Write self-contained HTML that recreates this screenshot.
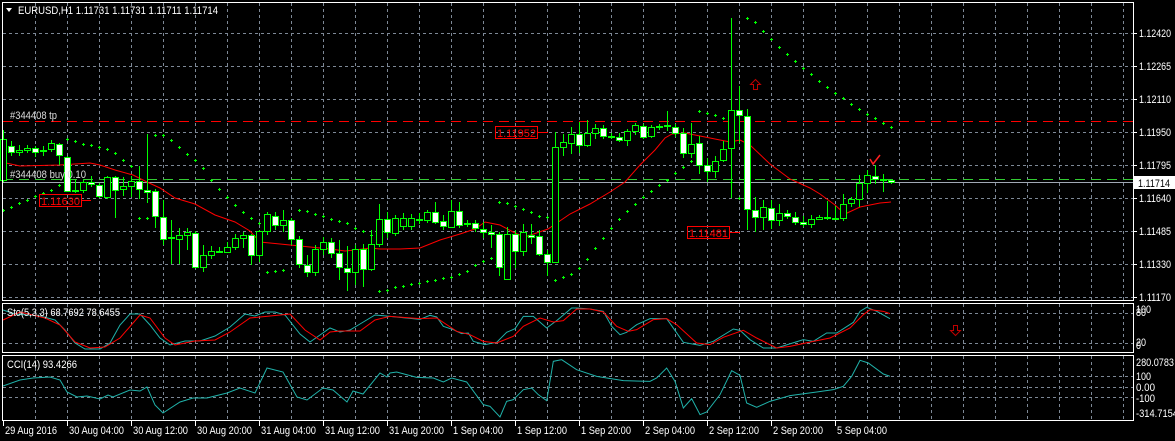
<!DOCTYPE html>
<html><head><meta charset="utf-8"><style>
html,body{margin:0;padding:0;background:#000;width:1175px;height:441px;overflow:hidden}
svg{display:block}
text{font-family:"Liberation Sans",sans-serif;font-size:11px}
</style></head><body>
<svg id="s" width="1175" height="441" xmlns="http://www.w3.org/2000/svg">
<rect width="1175" height="441" fill="#000"/>
<g id="grid" stroke="#7d8896" stroke-width="1" stroke-dasharray="3,3"></g>
<g id="lines"></g>
<g id="cand"></g>
<g id="sar" fill="#00ff00"></g>
<rect x="2.5" y="2.5" width="1131" height="298" fill="none" stroke="#fff"/>
<rect x="2.5" y="303.5" width="1131" height="49" fill="none" stroke="#fff"/>
<rect x="2.5" y="355.5" width="1131" height="65" fill="none" stroke="#fff"/>
<g id="txt" fill="#fff"></g>
</svg>
<script>
var NS="http://www.w3.org/2000/svg";
function el(p,t,a,tx){var e=document.createElementNS(NS,t);for(var k in a)e.setAttribute(k,a[k]);if(tx!=null)e.textContent=tx;document.getElementById(p).appendChild(e);return e;}
function tl(a,s,w){a.textLength=w;a.lengthAdjust='spacingAndGlyphs';return el('txt','text',a,s);}
for(var x=35;x<=1123;x+=32){el('grid','line',{x1:x+.5,y1:3,x2:x+.5,y2:300});el('grid','line',{x1:x+.5,y1:304,x2:x+.5,y2:352});el('grid','line',{x1:x+.5,y1:356,x2:x+.5,y2:420});}
for(var y=33;y<=297;y+=33){el('grid','line',{x1:3,y1:y+.5,x2:1133,y2:y+.5});}
[313,343].forEach(function(y){el('grid','line',{x1:3,y1:y+.5,x2:1133,y2:y+.5});});
[376,387,397].forEach(function(y){el('grid','line',{x1:3,y1:y+.5,x2:1133,y2:y+.5});});
el('lines','line',{x1:3,y1:121.5,x2:1133,y2:121.5,stroke:'#ff0000','stroke-dasharray':'10,6'});
el('lines','line',{x1:3,y1:179.5,x2:1133,y2:179.5,stroke:'#32cd32','stroke-dasharray':'10,6'});
el('lines','line',{x1:3,y1:182.5,x2:1133,y2:182.5,stroke:'#a0a8b4'});
var ma=[[6,163],[20,166],[60,165],[90,163],[100,165],[115,170],[133,175],[147,182],[160,188],[175,198],[195,204],[215,215],[235,222],[250,231],[260,242],[280,244],[300,246],[330,249],[345,251],[355,250],[370,248],[380,249],[400,249],[420,248],[440,240],[460,234],[475,229],[485,222],[500,225],[515,233],[525,237],[548,229],[570,214],[590,204],[610,192],[625,182],[640,165],[655,150],[665,138],[672,134],[685,133],[700,136],[710,138],[730,142],[740,140],[750,145],[770,164],[790,179],[810,188],[820,194],[835,205],[845,214],[860,207],[880,203],[891,202]];
el('lines','polyline',{points:ma.join(' '),fill:'none',stroke:'#ff0000','stroke-width':1});
var C=[[3,139,180,0,130,182],[11,146,152,1,141,156],[19,150,152,0,145,156],[27,148,150,0,145,153],[35,148,152,1,146,157],[43,150,151,1,146,156],[51,143,149,0,140,152],[59,144,155,1,143,165],[67,157,191,1,156,192],[75,190,191,2,180,193],[83,182,190,0,179,193],[91,182,184,1,176,187],[99,185,196,1,183,198],[107,177,197,0,176,199],[115,177,190,1,176,218],[123,186,189,0,177,196],[131,181,186,0,176,197],[139,181,189,1,166,199],[147,190,192,1,134,203],[155,191,216,1,189,228],[163,217,239,1,200,245],[171,237,238,2,220,264],[179,235,239,0,228,264],[187,232,235,0,228,250],[195,233,267,1,231,268],[203,255,267,0,245,272],[211,251,255,0,246,259],[219,251,252,2,247,253],[227,247,252,0,242,253],[235,238,247,0,234,250],[243,235,238,0,232,248],[251,235,255,1,234,265],[259,231,255,0,230,262],[267,214,231,0,212,235],[275,216,225,1,212,230],[283,220,225,0,210,232],[291,220,239,1,218,245],[299,239,264,1,236,268],[307,265,272,1,255,277],[315,249,272,0,245,276],[323,242,249,0,237,255],[331,242,253,1,238,258],[339,253,267,1,240,280],[347,268,272,1,246,291],[355,249,272,0,245,285],[363,249,269,1,244,287],[371,244,269,0,230,271],[379,219,244,0,204,247],[387,219,232,1,212,238],[395,218,233,0,215,236],[403,218,226,0,213,230],[411,218,226,0,214,230],[419,219,220,2,213,224],[427,212,220,0,210,223],[435,212,222,1,202,224],[443,221,226,1,215,230],[451,211,227,0,200,228],[459,211,225,1,202,228],[467,223,224,2,220,227],[475,223,228,1,220,232],[483,229,232,1,222,238],[491,232,234,1,225,248],[499,234,267,1,232,276],[507,234,279,0,227,280],[515,234,251,1,230,268],[523,232,251,0,224,256],[531,235,237,1,224,244],[539,236,254,1,230,256],[547,254,262,1,250,276],[555,147,262,0,132,263],[563,142,147,0,134,156],[571,134,143,0,127,154],[579,134,145,1,122,153],[587,133,145,0,120,147],[595,128,133,0,124,139],[603,128,136,1,125,139],[611,136,137,2,133,139],[619,137,140,1,133,142],[627,131,140,0,129,146],[635,125,131,0,123,135],[643,126,137,1,124,139],[651,127,136,0,125,138],[659,126,127,2,124,130],[667,125,126,2,111,131],[675,127,133,1,124,137],[683,133,153,1,128,158],[691,144,153,0,123,158],[699,143,165,1,136,174],[707,165,171,1,158,182],[715,161,171,0,156,178],[723,149,160,0,141,162],[731,110,148,0,18,198],[739,110,115,1,86,143],[747,116,209,1,109,230],[755,210,217,1,197,232],[763,207,217,0,200,230],[771,208,220,1,200,229],[779,213,220,0,204,226],[787,213,216,1,210,219],[795,217,222,1,212,225],[803,222,224,1,216,227],[811,219,224,0,215,228],[819,217,219,0,215,220],[827,217,218,2,201,220],[835,218,219,2,206,220],[843,204,218,0,194,221],[851,199,203,0,197,207],[859,183,199,0,175,207],[867,175,183,0,170,193],[875,176,179,1,165,184],[883,179,180,2,174,192],[891,180,182,1,179,184]];
C.forEach(function(c){var x=c[0];
 el('cand','line',{x1:x+.5,y1:c[4],x2:x+.5,y2:c[5],stroke:'#00ff00'});
 var h=Math.max(1,c[2]-c[1]);
 if(c[3]==2){el('cand','rect',{x:x-3,y:c[1],width:7,height:h<=1?2:h,fill:'#00ff00'});}
 else el('cand','rect',{x:x-2.5,y:c[1]+.5,width:6,height:h,fill:c[3]?'#fff':'#000',stroke:'#00ff00'});
});
var S=[[3,210],[11,207],[19,203],[27,200],[35,196],[43,193],[51,190],[59,185],[67,139],[75,141],[83,144],[91,145],[99,147],[107,149],[115,153],[123,160],[131,166],[139,218],[147,218],[155,135],[163,135],[171,140],[179,147],[187,154],[195,160],[203,168],[211,180],[219,189],[227,197],[235,205],[243,212],[251,218],[259,223],[267,272],[275,271],[283,270],[299,210],[307,211],[315,214],[323,216],[331,219],[339,221],[347,223],[355,228],[363,231],[371,235],[379,291],[387,290],[395,287],[403,286],[411,284],[419,283],[427,281],[435,280],[443,278],[451,277],[459,274],[467,271],[475,265],[483,261],[491,258],[499,202],[507,203],[515,206],[523,209],[531,212],[539,216],[547,217],[555,280],[563,277],[571,274],[579,268],[587,259],[595,248],[603,238],[611,228],[619,219],[627,211],[635,204],[643,197],[651,191],[659,185],[667,180],[675,173],[683,167],[691,161],[699,111],[707,113],[715,115],[723,118],[731,182],[739,198],[747,18],[755,22],[763,31],[771,39],[779,47],[787,54],[795,61],[803,68],[811,74],[819,81],[827,87],[835,93],[843,98],[851,104],[859,109],[867,114],[875,118],[883,123],[891,127]];
S.forEach(function(p){el('sar','rect',{x:p[0]-1,y:p[1],width:3,height:1});el('sar','rect',{x:p[0],y:p[1]-1,width:1,height:3});});
function Z(a){return a.map(function(p){return [390+p[0]/3,298+p[1]/3];});}
var stoC=[[3,310],[15,314],[40,316],[55,320],[65,330],[75,343],[85,349],[100,349],[110,343],[120,325],[130,314],[140,314],[150,325],[160,338],[170,345],[185,341],[200,341],[215,336],[230,327],[245,314],[255,316],[265,312],[275,312],[285,315],[300,334],[310,342],[320,335],[330,328],[340,332],[350,330],[360,324],[375,315]].concat(Z([[0,55],[90,64],[120,52],[140,57],[160,85],[190,95],[215,107],[235,105],[250,130],[285,140],[320,133],[350,103],[375,92],[400,55],[430,55],[470,90],[500,68],[545,30],[560,30],[600,33],[640,40],[665,85],[690,110],[710,103],[740,80],[780,62],[830,62],[880,133],[930,142],[970,130],[1030,93],[1050,97],[1080,125],[1120,150],[1160,150],[1240,125],[1270,130],[1310,105],[1340,105],[1390,73],[1410,40],[1430,28],[1460,40],[1500,62]]));
var stoR=[[3,320],[20,312],[45,318],[60,325],[75,342],[90,348],[105,347],[120,338],[140,315],[150,318],[165,338],[175,345],[195,341],[215,340],[230,332],[250,318],[270,316],[290,314],[305,330],[320,340],[330,332],[340,331],[360,331],[375,320]].concat(Z([[0,55],[90,62],[140,60],[200,100],[240,110],[280,130],[320,135],[370,115],[400,85],[450,60],[490,72],[520,68],[560,33],[600,33],[640,42],[680,85],[715,100],[740,95],[790,65],[830,62],[860,80],[920,135],[960,140],[1000,118],[1060,97],[1100,120],[1160,150],[1200,145],[1270,130],[1320,120],[1380,90],[1420,50],[1440,35],[1480,40],[1500,47]]));
el('lines','polyline',{points:stoC.join(' '),fill:'none',stroke:'#20b2aa'});
el('lines','polyline',{points:stoR.join(' '),fill:'none',stroke:'#ff0000'});
var cci=[[3,386],[20,380],[33,378],[50,377],[60,380],[67,392],[77,397],[87,396],[100,399],[108,395],[113,397],[130,390],[140,391],[147,387],[155,405],[163,413],[180,402],[193,398],[207,398],[227,393],[240,388],[255,393],[267,368],[283,372],[297,397],[307,400],[323,388],[333,390],[347,402],[353,391],[363,394],[380,373],[387,377]].concat(Z([[0,225],[20,222],[80,238],[130,240],[160,252],[185,240],[230,252],[280,320],[300,325],[330,357],[350,310],[370,305],[400,275],[425,270],[445,290],[470,308],[490,190],[515,185],[560,215],[620,235],[700,248],[780,250],[800,240],[830,210],[855,250],[880,330],[905,302],[930,350],[950,342],[990,290],[1025,218],[1050,232],[1070,315],[1100,328],[1140,310],[1200,293],[1280,282],[1330,275],[1360,265],[1385,235],[1410,187],[1435,195],[1480,228],[1500,235]]));
el('lines','polyline',{points:cci.join(' '),fill:'none',stroke:'#20b2aa'});
el('txt','path',{d:'M6 8 L12 8 L9 12 Z',fill:'#fff'});
tl({x:18,y:14},'EURUSD,H1  1.11731 1.11731 1.11711 1.11714',200);
tl({x:10,y:119,fill:'#dcdcdc'},'#344408 tp',47);
tl({x:10,y:178,fill:'#dcdcdc'},'#344408 buy 0.10',76);
tl({x:7,y:316},'Sto(5,3,3) 68.7692 78.6455',113);
tl({x:7,y:368},'CCI(14) 93.4266',70);
[['1.12420',33],['1.12265',66],['1.12110',99],['1.11950',132],['1.11795',165],['1.11640',198],['1.11485',231],['1.11330',264],['1.11170',297]].forEach(function(p){
 el('txt','line',{x1:1133,y1:p[1]+.5,x2:1137,y2:p[1]+.5,stroke:'#fff'});
 tl({x:1139,y:p[1]+4},p[0],32);});
el('txt','rect',{x:1134,y:176,width:41,height:13,fill:'#fff'});
tl({x:1138,y:187,fill:'#000'},'1.11714',32);
[['100',1136,313,15],['80',1136,316,10],['20',1136,346,10],['0',1136,349,5],['280.0783',1136,366,38],['100',1136,380,15],['0.00',1136,391,19],['-100',1136,402,19],['-314.7154',1136,417,42]].forEach(function(p){tl({x:p[1],y:p[2]},p[0],p[3]);});
[['29 Aug 2016',3,52],['30 Aug 04:00',67,55],['30 Aug 12:00',131,55],['30 Aug 20:00',195,55],['31 Aug 04:00',259,55],['31 Aug 12:00',323,55],['31 Aug 20:00',387,55],['1 Sep 04:00',451,50],['1 Sep 12:00',515,50],['1 Sep 20:00',579,50],['2 Sep 04:00',643,50],['2 Sep 12:00',707,50],['2 Sep 20:00',771,50],['5 Sep 04:00',835,50]].forEach(function(p){
 el('txt','line',{x1:p[1]+.5,y1:421,x2:p[1]+.5,y2:426,stroke:'#fff'});
 tl({x:p[1]+2,y:434},p[0],p[2]);});
[['1.11630',39,194,91],['1.11952',495,126,548],['1.11481',687,226,740]].forEach(function(p){
 el('txt','rect',{x:p[1]+.5,y:p[2]+.5,width:42,height:12,fill:'none',stroke:'#ff0000'});
 tl({x:p[1]+2,y:p[2]+11,fill:'#ff0000'},p[0],39);
 el('txt','line',{x1:p[1]+43,y1:p[2]+6.5,x2:p[3],y2:p[2]+6.5,stroke:'#ff0000'});});
el('txt','path',{d:'M755.5 79.5 L760.5 84.5 L757.5 84.5 L757.5 89.5 L753.5 89.5 L753.5 84.5 L750.5 84.5 Z',fill:'none',stroke:'#c00000'});
el('txt','path',{d:'M955.5 335.5 L960.5 330.5 L957.5 330.5 L957.5 325.5 L953.5 325.5 L953.5 330.5 L950.5 330.5 Z',fill:'none',stroke:'#c00000'});
el('txt','path',{d:'M870 159 L873 164 L880 155',fill:'none',stroke:'#ff2020','stroke-width':1.5});
</script>
</body></html>
